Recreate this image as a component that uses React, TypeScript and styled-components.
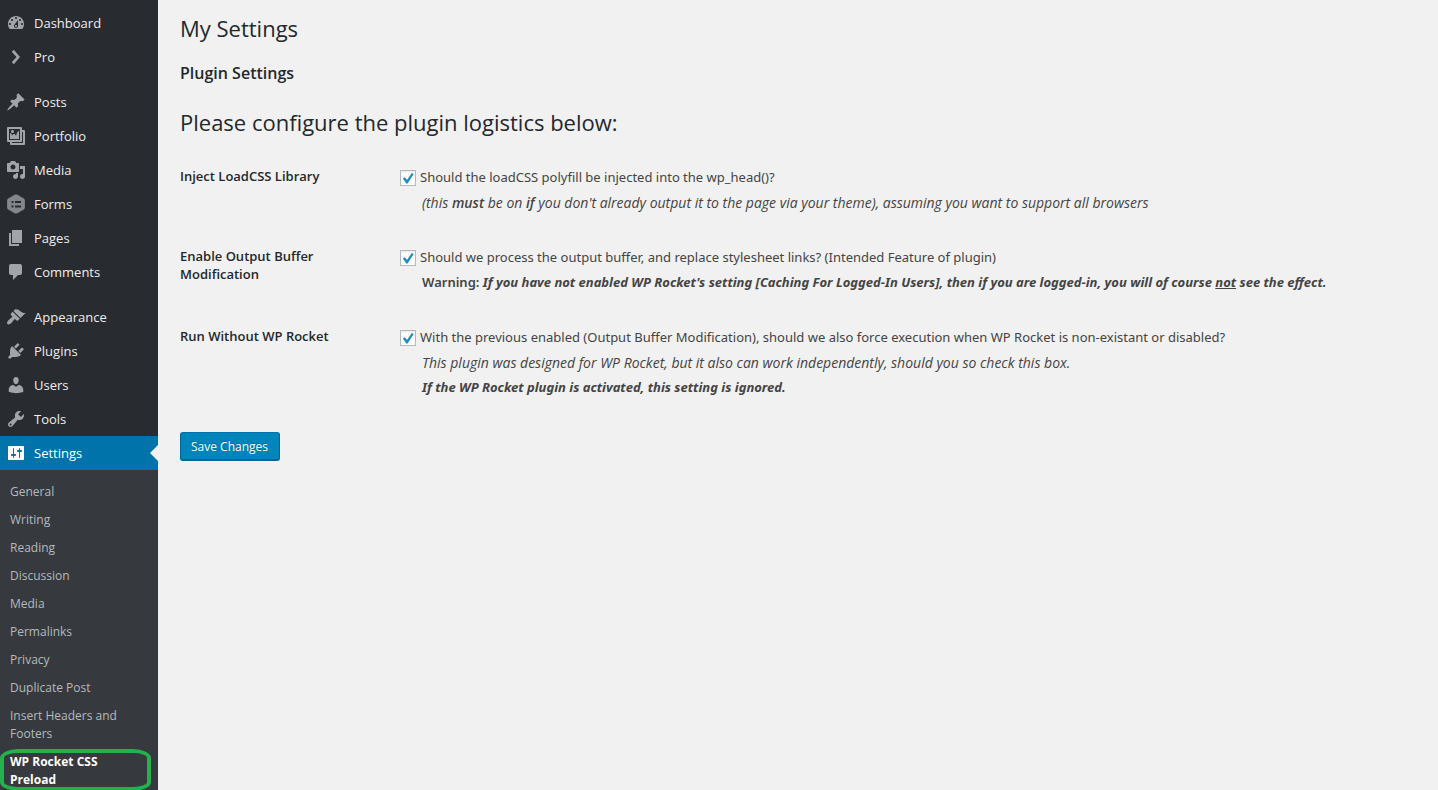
import React from "react";
import styled, { createGlobalStyle, css } from "styled-components";

const GlobalStyle = createGlobalStyle`
  *, *::before, *::after { box-sizing: border-box; }
  body {
    margin: 0;
    background: #f1f1f1;
    color: #444;
    font-family: "Open Sans", "Noto Sans", sans-serif;
    font-size: 13px;
  }
`;

const Shell = styled.div`
  display: flex;
  height: 100vh;
`;

const Sidebar = styled.nav`
  flex: 0 0 158px;
  padding-top: 6px;
  background: #282b30;
  overflow-y: auto;
  scrollbar-width: none;
`;

const MenuGroup = styled.ul`
  margin: 0 0 11px;
  padding: 0;
  list-style: none;

  &:last-child { margin-bottom: 0; }
`;

const MenuLink = styled.a<{ $current?: boolean }>`
  position: relative;
  display: flex;
  align-items: center;
  gap: 8px;
  height: 34px;
  padding-left: 6px;
  color: ${(p) => (p.$current ? "#fff" : "#eee")};
  background: ${(p) => (p.$current ? "#0073aa" : "transparent")};
  text-decoration: none;

  ${(p) =>
    p.$current &&
    css`
      &::after {
        content: "";
        position: absolute;
        right: 0;
        top: 9px;
        border: 8px solid transparent;
        border-right-color: #f1f1f1;
        border-left-width: 0;
      }
    `}
`;

const MenuIcon = styled.svg<{ $tone: string }>`
  flex: none;
  width: 20px;
  height: 20px;
  fill: ${(p) => p.$tone};
`;

const Submenu = styled.ul`
  margin: 0;
  padding: 7px 0;
  list-style: none;
  background: #363a3e;
`;

const SubmenuItem = styled.li`
  position: relative;
`;

const SubmenuLink = styled.a<{ $current?: boolean }>`
  display: block;
  padding: 6px 24px 4px 10px;
  color: ${(p) => (p.$current ? "#fff" : "#b4b9be")};
  font-size: 12px;
  font-weight: ${(p) => (p.$current ? 700 : 400)};
  line-height: 18px;
  text-decoration: none;
`;

const Highlight = styled.span`
  position: absolute;
  inset: 2px 7px 2px 0;
  border: 4px solid #22b14c;
  border-radius: 18px / 9px;
  pointer-events: none;
`;

const Main = styled.main`
  flex: 1;
  min-width: 0;
  padding: 12px 20px 20px 22px;
  overflow-y: auto;
`;

const PageTitle = styled.h1`
  margin: 0;
  color: #23282d;
  font-size: 22px;
  font-weight: 400;
  line-height: 32px;
`;

const FormTitle = styled.h2`
  margin: 17px 0 21px;
  color: #23282d;
  font-size: 16px;
  font-weight: 600;
  line-height: 24px;
`;

const SectionTitle = styled.h3`
  margin: 0 0 9px;
  color: #23282d;
  font-size: 22px;
  font-weight: 400;
  line-height: 32px;
`;

const SettingRow = styled.div`
  display: grid;
  grid-template-columns: 160px minmax(0, 1fr);
  column-gap: 60px;
  padding-bottom: 12px;
`;

const SettingName = styled.div`
  padding-top: 20px;
  color: #23282d;
  font-weight: 600;
  line-height: 18px;
`;

const SettingBody = styled.div`
  padding-top: 18px;
  font-family: "Noto Sans", "Open Sans", sans-serif;
  line-height: 25px;
`;

const OptionLabel = styled.label`
  display: flex;
  align-items: center;
  gap: 4px;
`;

const CheckFrame = styled.span`
  display: grid;
  place-items: center;
`;

const CheckBox = styled.input`
  appearance: none;
  grid-area: 1 / 1;
  width: 16px;
  height: 16px;
  margin: 0;
  border: 1px solid #b4b9be;
  background: #fff;
  box-shadow: inset 0 1px 2px rgba(0, 0, 0, 0.1);
`;

const CheckMark = styled.svg`
  grid-area: 1 / 1;
  z-index: 1;
  display: none;
  width: 16px;
  height: 16px;
  fill: #1e8cbe;
  pointer-events: none;

  input:checked + & { display: block; }
`;

const Note = styled.p<{ $strong?: boolean }>`
  margin: 0;
  padding-left: 22px;
  font-family: ${(p) => (p.$strong ? "inherit" : '"Open Sans", "Noto Sans", sans-serif')};
  font-size: ${(p) => (p.$strong ? "13px" : "14px")};
  font-style: italic;

  strong { font-weight: ${(p) => (p.$strong ? 700 : 600)}; }
`;

const Upright = styled.span`
  font-style: normal;
  font-weight: 600;
`;

const SaveButton = styled.button`
  height: 29px;
  margin-top: 20px;
  padding: 0 11px 1px 10px;
  border: 1px solid;
  border-color: #0073aa #006799 #006799;
  border-radius: 3px;
  background: #0085ba;
  box-shadow: inset 0 -1px 0 #006799;
  color: #fff;
  font: inherit;
  font-size: 12px;
  text-shadow: 0 -1px 1px #006799;
  cursor: pointer;
`;

type MenuEntry = { label: string; path: string; tone?: string };

const groups: MenuEntry[][] = [
  [
    {
      label: "Dashboard",
      path: "M3.76 16h12.48c1.1-1.37 1.76-3.11 1.76-5 0-4.42-3.58-8-8-8s-8 3.58-8 8c0 1.89.66 3.63 1.76 5zM10 4c.55 0 1 .45 1 1s-.45 1-1 1-1-.45-1-1 .45-1 1-1zM6 6c.55 0 1 .45 1 1s-.45 1-1 1-1-.45-1-1 .45-1 1-1zm8 0c.55 0 1 .45 1 1s-.45 1-1 1-1-.45-1-1 .45-1 1-1zm-5.37 5.55L12 7v6c0 1.1-.9 2-2 2s-2-.9-2-2c0-.57.24-1.08.63-1.45zM4 10c.55 0 1 .45 1 1s-.45 1-1 1-1-.45-1-1 .45-1 1-1zm12 0c.55 0 1 .45 1 1s-.45 1-1 1-1-.45-1-1 .45-1 1-1zm-5 3c0-.55-.45-1-1-1s-1 .45-1 1 .45 1 1 1 1-.45 1-1z",
    },
    { label: "Pro", path: "M5.8 15.2l4.7-5.2-4.7-5.2 2-2L14 10l-6.2 7.2z" },
  ],
  [
    {
      label: "Posts",
      path: "M10.44 3.02l1.82-1.82 6.36 6.35-1.83 1.82c-1.05-.68-2.48-.57-3.41.36l-.75.75c-.92.93-1.04 2.35-.35 3.41l-1.83 1.82-2.41-2.41-2.8 2.79c-.42.42-3.38 2.71-3.8 2.29s1.86-3.39 2.28-3.81l2.79-2.79L4.1 9.36l1.83-1.82c1.05.69 2.48.57 3.4-.36l.75-.75c.93-.92 1.05-2.35.36-3.41z",
    },
    {
      label: "Portfolio",
      path: "M16 4h1.96c.57 0 1.04.47 1.04 1.04v12.92c0 .57-.47 1.04-1.04 1.04H5.04C4.47 19 4 18.53 4 17.96V16H2.04C1.47 16 1 15.53 1 14.96V2.04C1 1.47 1.47 1 2.04 1h12.92c.57 0 1.04.47 1.04 1.04V4zM3 14h11V3H3v11zm5-8.5C8 4.67 7.33 4 6.5 4S5 4.67 5 5.5 5.67 7 6.5 7 8 6.33 8 5.5zm2 4.5s1-5 3-5v8H4V7c2 0 2 3 2 3s.33-2 2-2 2 2 2 2zm7 7V6h-1v8.96c0 .57-.47 1.04-1.04 1.04H6v1h11z",
    },
    {
      label: "Media",
      path: "M13 11V4c0-.55-.45-1-1-1h-1.67L9 1H5L3.67 3H2c-.55 0-1 .45-1 1v7c0 .55.45 1 1 1h10c.55 0 1-.45 1-1zM7 4.5c1.38 0 2.5 1.12 2.5 2.5S8.38 9.5 7 9.5 4.5 8.38 4.5 7 5.62 4.5 7 4.5zM14 6h5v10.5c0 1.38-1.12 2.5-2.5 2.5S14 17.88 14 16.5s1.12-2.5 2.5-2.5c.17 0 .34.02.5.05V9h-3V6zm-4 8.05V13h2v3.5c0 1.38-1.12 2.5-2.5 2.5S7 17.88 7 16.5 8.12 14 9.5 14c.17 0 .34.02.5.05z",
    },
    {
      label: "Forms",
      tone: "#82878c",
      path: "M10 .5c.5 0 .9.1 1.3.3l6.2 3.5c.9.5 1.4 1.2 1.4 2.2v7c0 1-.5 1.7-1.4 2.2l-6.2 3.5c-.8.4-1.8.4-2.6 0l-6.2-3.5c-.9-.5-1.4-1.2-1.4-2.2v-7c0-1 .5-1.7 1.4-2.2l6.2-3.5c.4-.2.8-.3 1.3-.3zM5.5 7v2h2V7zM9 7v2h6V7zM5.5 11.5v2h2v-2zM9 11.5v2h6v-2z",
    },
    { label: "Pages", path: "M6 15V2h10v13H6zm-1 1h8v2H3V5h2v11z" },
    {
      label: "Comments",
      path: "M5 2h9c1.1 0 2 .9 2 2v7c0 1.1-.9 2-2 2h-2l-5 5v-5H5c-1.1 0-2-.9-2-2V4c0-1.1.9-2 2-2z",
    },
  ],
  [
    {
      label: "Appearance",
      path: "M14.48 11.06L7.41 3.99l1.5-1.5c.5-.56 2.3-.47 3.51.32 1.21.8 1.43 1.28 2.91 2.1 1.18.64 2.45 1.26 4.45.85zm-.71.71L6.7 4.7 4.93 6.47c-.39.39-.39 1.02 0 1.41l1.06 1.06c.39.39.39 1.03 0 1.42-.6.6-1.43 1.11-2.21 1.69-.35.26-.7.53-1.01.84C1.43 14.23.4 16.08 1.4 17.07c.99 1 2.84-.03 4.18-1.36.31-.31.58-.66.85-1.02.57-.78 1.08-1.61 1.69-2.21.39-.39 1.02-.39 1.41 0l1.06 1.06c.39.39 1.02.39 1.41 0z",
    },
    {
      label: "Plugins",
      path: "M13.11 4.36L9.87 7.6 8 5.73l3.24-3.24c.35-.34 1.05-.2 1.56.32.52.51.66 1.21.31 1.55zm-8 1.77l.91-1.12 9.01 9.01-1.19.84c-.71.71-2.63 1.16-3.82 1.16H6.14L4.9 17.26c-.59.59-1.54.59-2.12 0-.59-.58-.59-1.53 0-2.12l1.24-1.24v-3.88c0-1.13.4-3.19 1.09-3.89zm7.26 3.97l3.24-3.24c.34-.35 1.04-.21 1.55.31.52.51.66 1.21.31 1.55l-3.24 3.25z",
    },
    {
      label: "Users",
      path: "M10 9.25c-2.27 0-2.73-3.44-2.73-3.44C7 4.02 7.82 2 9.97 2c2.16 0 2.98 2.02 2.71 3.81 0 0-.41 3.44-2.68 3.44zm0 2.57L12.72 10c2.39 0 4.52 2.33 4.52 4.53v2.49s-3.65 1.13-7.24 1.13c-3.65 0-7.24-1.13-7.24-1.13v-2.49c0-2.25 1.94-4.48 4.47-4.48z",
    },
    {
      label: "Tools",
      path: "M16.68 9.77c-1.34 1.34-3.3 1.67-4.95.99l-5.41 6.52c-.99.99-2.59.99-3.58 0s-.99-2.59 0-3.57l6.52-5.42c-.68-1.65-.35-3.61.99-4.95 1.28-1.28 3.12-1.62 4.72-1.06l-2.89 2.89 2.82 2.82 2.86-2.87c.53 1.58.18 3.39-1.08 4.65zM3.81 16.21c.4.39 1.04.39 1.43 0 .4-.4.4-1.04 0-1.43-.39-.4-1.03-.4-1.43 0-.39.39-.39 1.03 0 1.43z",
    },
    {
      label: "Settings",
      tone: "#fff",
      path: "M18 16V4c0-.55-.45-1-1-1H3c-.55 0-1 .45-1 1v12c0 .55.45 1 1 1h14c.55 0 1-.45 1-1zM8 11h1c.55 0 1 .45 1 1s-.45 1-1 1H8v1.5c0 .28-.22.5-.5.5s-.5-.22-.5-.5V13H6c-.55 0-1-.45-1-1s.45-1 1-1h1V5.5c0-.28.22-.5.5-.5s.5.22.5.5V11zm5-2h-1c-.55 0-1-.45-1-1s.45-1 1-1h1V5.5c0-.28.22-.5.5-.5s.5.22.5.5V7h1c.55 0 1 .45 1 1s-.45 1-1 1h-1v5.5c0 .28-.22.5-.5.5s-.5-.22-.5-.5V9z",
    },
  ],
];

const settingsPages = [
  "General",
  "Writing",
  "Reading",
  "Discussion",
  "Media",
  "Permalinks",
  "Privacy",
  "Duplicate Post",
  "Insert Headers and Footers",
  "WP Rocket CSS Preload",
];

const currentPage = "WP Rocket CSS Preload";

function Setting({
  id,
  name,
  question,
  children,
}: {
  id: string;
  name: string;
  question: string;
  children: React.ReactNode;
}) {
  return (
    <SettingRow>
      <SettingName>{name}</SettingName>
      <SettingBody>
        <OptionLabel htmlFor={id}>
          <CheckFrame>
            <CheckBox id={id} type="checkbox" defaultChecked />
            <CheckMark viewBox="0 0 16 16" aria-hidden="true">
              <path d="M2.8 8.6l2-1.3 2.2 2.7L11.8 3l1.9 1.1L7.6 13.6H6.3z" />
            </CheckMark>
          </CheckFrame>
          {question}
        </OptionLabel>
        {children}
      </SettingBody>
    </SettingRow>
  );
}

export default function App() {
  return (
    <>
      <GlobalStyle />
      <Shell>
        <Sidebar aria-label="Main menu">
          {groups.map((group, i) => (
            <MenuGroup key={i}>
              {group.map(({ label, path, tone = "#a0a5aa" }) => {
                const current = label === "Settings";
                return (
                  <li key={label}>
                    <MenuLink href="#" $current={current}>
                      <MenuIcon viewBox="0 0 20 20" $tone={tone} aria-hidden="true">
                        <path fillRule="evenodd" d={path} />
                      </MenuIcon>
                      {label}
                    </MenuLink>
                    {current && (
                      <Submenu>
                        {settingsPages.map((page) => (
                          <SubmenuItem key={page}>
                            <SubmenuLink href="#" $current={page === currentPage}>
                              {page}
                            </SubmenuLink>
                            {page === currentPage && <Highlight />}
                          </SubmenuItem>
                        ))}
                      </Submenu>
                    )}
                  </li>
                );
              })}
            </MenuGroup>
          ))}
        </Sidebar>
        <Main>
          <PageTitle>My Settings</PageTitle>
          <form onSubmit={(e) => e.preventDefault()}>
            <FormTitle>Plugin Settings</FormTitle>
            <SectionTitle>Please configure the plugin logistics below:</SectionTitle>
            <Setting
              id="inject-loadcss"
              name="Inject LoadCSS Library"
              question="Should the loadCSS polyfill be injected into the wp_head()?"
            >
              <Note>
                (this <strong>must</strong> be on <strong>if</strong> you don't already output it to the page via your
                theme), assuming you want to support all browsers
              </Note>
            </Setting>
            <Setting
              id="output-buffer"
              name="Enable Output Buffer Modification"
              question="Should we process the output buffer, and replace stylesheet links? (Intended Feature of plugin)"
            >
              <Note $strong>
                <Upright>Warning:</Upright>{" "}
                <strong>
                  If you have not enabled WP Rocket's setting [Caching For Logged-In Users], then if you are logged-in,
                  you will of course <u>not</u> see the effect.
                </strong>
              </Note>
            </Setting>
            <Setting
              id="without-rocket"
              name="Run Without WP Rocket"
              question="With the previous enabled (Output Buffer Modification), should we also force execution when WP Rocket is non-existant or disabled?"
            >
              <Note>
                This plugin was designed for WP Rocket, but it also can work independently, should you so check this
                box.
              </Note>
              <Note $strong>
                <strong>If the WP Rocket plugin is activated, this setting is ignored.</strong>
              </Note>
            </Setting>
            <SaveButton type="submit">Save Changes</SaveButton>
          </form>
        </Main>
      </Shell>
    </>
  );
}
